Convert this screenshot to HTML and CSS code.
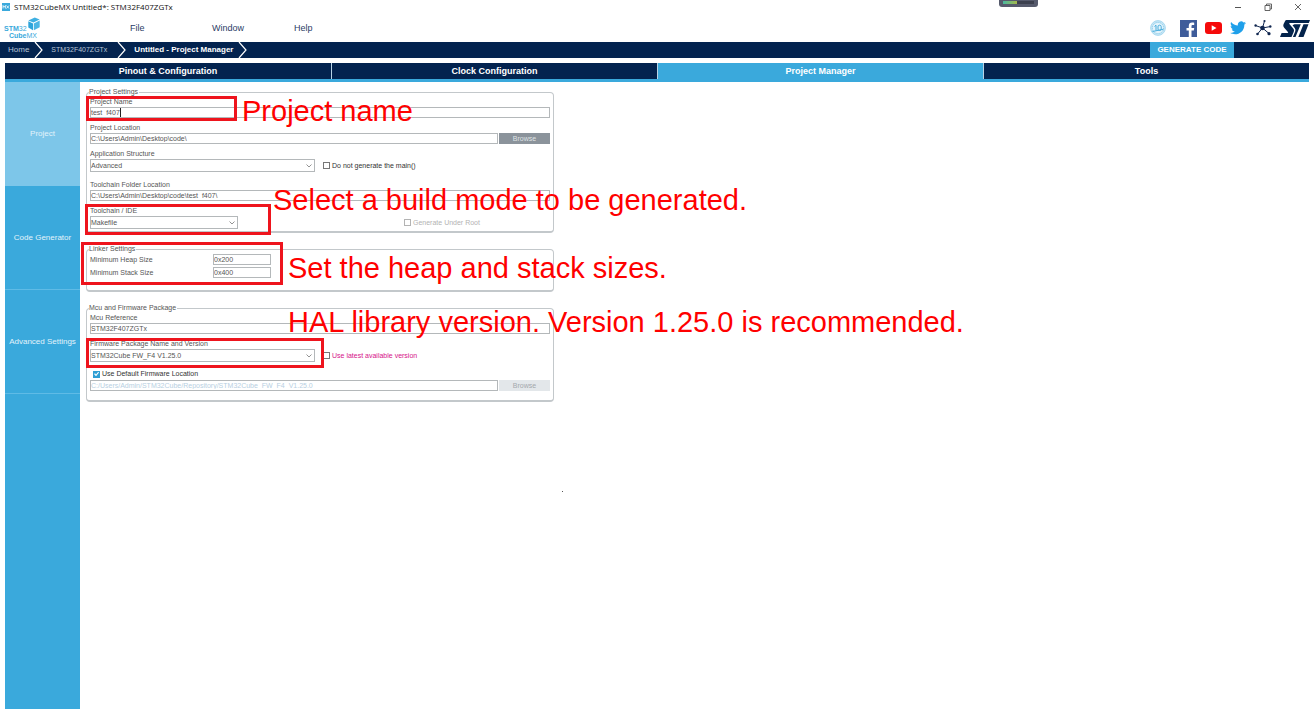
FILE: index.html
```html
<!DOCTYPE html>
<html lang="en">
<head>
<meta charset="utf-8">
<title>STM32CubeMX Untitled*: STM32F407ZGTx</title>
<link rel="stylesheet" href="styles.css">
</head>
<body>
<header class="titlebar">
  <svg class="app-icon" viewBox="0 0 8 8" width="8" height="8" aria-hidden="true"><rect width="8" height="8" fill="#3aa9dc"/><path d="M1 5.500V2.500l1.200 1.700 1.200-1.700v3M4.500 2.500l2.500 3M7 2.500l-2.500 3" fill="none" stroke="#fff" stroke-width=".8"/></svg>
  <span class="title">STM32CubeMX Untitled*: STM32F407ZGTx</span>
  <div class="window-buttons">
    <button aria-label="Minimize"><svg viewBox="0 0 8 8" width="8" height="8"><path d="M1 4.500h6" stroke="#555" fill="none"/></svg></button>
    <button aria-label="Restore"><svg viewBox="0 0 8 8" width="8" height="8"><path d="M1 2.500h5v5h-5zM2.500 2.500v-1.500h5v5h-1.500" stroke="#555" fill="none" stroke-width=".9"/></svg></button>
    <button aria-label="Close"><svg viewBox="0 0 8 8" width="8" height="8"><path d="M1 1l6 6M7 1l-6 6" stroke="#555" fill="none" stroke-width=".9"/></svg></button>
  </div>
</header>

<div class="menubar">
  <div class="logo">
    <div class="logo-top"><b>STM</b>32</div>
    <div class="logo-bottom"><b>Cube</b>MX</div>
    <svg class="cube" viewBox="0 0 12 14" width="12" height="14" aria-hidden="true"><path d="M.3 3.400L6.800.4l4.900 2.200-6.300 3z" fill="#3fb0e2"/><path d="M.3 4.200l4.700 2.200v6.800L.3 10.400z" fill="#2fa5db"/><path d="M5.800 6.400l5.900-2.900v6.800l-5.900 3z" fill="#4db6e4"/></svg>
  </div>
  <nav class="menu">
    <button>File</button><button>Window</button><button>Help</button>
  </nav>
  <div class="links">
    <a href="#" aria-label="10 years"><svg viewBox="0 0 16 16" width="16" height="16"><circle cx="8" cy="8" r="7.400" fill="#c6e6f5" stroke="#9dd3ed" stroke-width=".8"/><circle cx="8" cy="8" r="5.600" fill="#e3f3fb" stroke="#7cc4e6" stroke-width=".8" stroke-dasharray="1.200 .8"/><path d="M4.500 6.500l1.500-1.300v5.300M8 6.500v2.700q0 1.300 1.600 1.300t1.600-1.300V6.700q0-1.500-1.600-1.500T8 6.700M2.500 11.500l11-2.300" fill="none" stroke="#4aaedd"/></svg></a>
    <a href="#" aria-label="Facebook"><svg viewBox="0 0 17 17" width="17" height="17"><rect width="17" height="17" fill="#3e5c9a"/><path d="M11.500 17v-6.500h2.300l.4-2.600h-2.700V6.300c0-.8.3-1.200 1.300-1.200h1.400V2.700c-.5-.1-1.200-.2-2-.2-2.200 0-3.400 1.200-3.400 3.400v2H6.500v2.600h2.300V17z" fill="#fff"/></svg></a>
    <a href="#" aria-label="YouTube"><svg viewBox="0 0 17 12" width="17" height="12"><rect width="17" height="12" rx="3" fill="#f50a0a"/><path d="M6.700 3.300v5.400L11.500 6z" fill="#fff"/></svg></a>
    <a href="#" aria-label="Twitter"><svg viewBox="0 0 24 20" width="16" height="14"><path d="M24 2.400c-.9.400-1.800.7-2.800.8 1-.6 1.800-1.600 2.200-2.700-1 .6-2 1-3.100 1.200A4.900 4.900 0 0 0 11.900 6.200C7.800 6 4.200 4 1.700.9c-1.300 2.300-.7 5.100 1.500 6.600-.8 0-1.600-.2-2.200-.6 0 2.300 1.600 4.400 3.900 4.900-.7.200-1.500.2-2.200.1.600 2 2.400 3.400 4.600 3.400A9.900 9.900 0 0 1 0 17.300C9.200 23 21.500 17 21.500 5.500V4.900c1-.7 1.800-1.600 2.500-2.500z" fill="#1fa0ea"/></svg></a>
    <a href="#" aria-label="Community"><svg viewBox="0 0 18 18" width="18" height="18"><path d="M8.500 9L1.500 6.500M8.500 9l2-7M8.500 9l8-1.500M8.500 9L3.500 15M8.500 9l6.500 5.500" stroke="#10264f" fill="none"/><g fill="#10264f"><circle cx="8.500" cy="9" r="2.300"/><circle cx="1.600" cy="6.500" r="1.200"/><circle cx="10.500" cy="2" r="1.100"/><circle cx="16.300" cy="7.500" r="1.200"/><circle cx="3.500" cy="15" r="1.300"/><circle cx="15" cy="14.700" r="1.600"/></g></svg></a>
    <a href="#" aria-label="STMicroelectronics"><svg viewBox="0 0 30 17" width="30" height="17"><path d="M6.500 0H30l-1.200 3H10q-1.400 0-.6 1l3.800 4.400q1.400 1.500.6 3.300L11.500 17H0l1.600-4h5.900q1.200 0 .4-1L4 7.400Q2.800 5.900 3.500 4.200L5 1.200Q5.500 0 6.500 0z" fill="#03234b"/><path d="M14.500 4.200h6.300L15.500 17h-2.600l2.300-5.500q.8-2-.5-3.500L12.500 5.300zM23.500 4.200h5L23.500 17h-5.200z" fill="#03234b"/></svg></a>
  </div>
</div>

<nav class="crumbs">
  <a href="#">Home</a>
  <svg viewBox="0 0 9 16" width="9" height="16"><path d="M1 0l7 8-7 8" fill="none" stroke="#fff" stroke-width="1.200"/></svg>
  <a href="#" class="device">STM32F407ZGTx</a>
  <svg viewBox="0 0 9 16" width="9" height="16"><path d="M1 0l7 8-7 8" fill="none" stroke="#fff" stroke-width="1.200"/></svg>
  <a href="#" class="current">Untitled - Project Manager</a>
  <svg viewBox="0 0 9 16" width="9" height="16"><path d="M1 0l7 8-7 8" fill="none" stroke="#fff" stroke-width="1.200"/></svg>
  <button class="generate">GENERATE CODE</button>
</nav>

<nav class="tabs">
  <button>Pinout &amp; Configuration</button>
  <button>Clock Configuration</button>
  <button class="active">Project Manager</button>
  <button>Tools</button>
</nav>

<div class="workspace">
  <nav class="sidebar">
    <button class="active">Project</button>
    <button>Code Generator</button>
    <button>Advanced Settings</button>
  </nav>
  <main class="form">
    <fieldset>
      <legend>Project Settings</legend>
      <div class="field"><label for="name">Project Name</label><input id="name" type="text" value="test_f407"></div>
      <div class="field"><label for="location">Project Location</label>
        <div class="with-button"><input id="location" type="text" value="C:\Users\Admin\Desktop\code\"><button class="browse">Browse</button></div></div>
      <div class="field"><label for="structure">Application Structure</label>
        <div class="line">
          <div class="select wide"><select id="structure"><option>Advanced</option></select><svg viewBox="0 0 6 4" width="6" height="4"><path d="M.5.500L3 3 5.500.500" fill="none" stroke="#777" stroke-width=".8"/></svg></div>
          <label class="check"><input type="checkbox">Do not generate the main()</label>
        </div></div>
      <div class="field spaced"><label for="folder">Toolchain Folder Location</label><input id="folder" type="text" value="C:\Users\Admin\Desktop\code\test_f407\"></div>
      <div class="field"><label for="ide">Toolchain / IDE</label>
        <div class="line far">
          <div class="select"><select id="ide"><option>Makefile</option></select><svg viewBox="0 0 6 4" width="6" height="4"><path d="M.5.500L3 3 5.500.500" fill="none" stroke="#777" stroke-width=".8"/></svg></div>
          <label class="check disabled"><input type="checkbox" disabled>Generate Under Root</label>
        </div></div>
    </fieldset>

    <fieldset class="linker">
      <legend>Linker Settings</legend>
      <div class="pair"><label for="heap">Minimum Heap Size</label><input id="heap" type="text" value="0x200"></div>
      <div class="pair"><label for="stack">Minimum Stack Size</label><input id="stack" type="text" value="0x400"></div>
    </fieldset>

    <fieldset class="firmware">
      <legend>Mcu and Firmware Package</legend>
      <div class="field"><label for="mcu">Mcu Reference</label><input id="mcu" type="text" value="STM32F407ZGTx"></div>
      <div class="field"><label for="package">Firmware Package Name and Version</label>
        <div class="line">
          <div class="select wide"><select id="package"><option>STM32Cube FW_F4 V1.25.0</option></select><svg viewBox="0 0 6 4" width="6" height="4"><path d="M.5.500L3 3 5.500.500" fill="none" stroke="#777" stroke-width=".8"/></svg></div>
          <label class="check latest"><input type="checkbox">Use latest available version</label>
        </div></div>
      <div class="field last">
        <label class="check default"><input type="checkbox" checked>Use Default Firmware Location</label>
        <div class="with-button"><input type="text" aria-label="Firmware location" disabled value="C:/Users/Admin/STM32Cube/Repository/STM32Cube_FW_F4_V1.25.0"><button class="browse" disabled>Browse</button></div></div>
    </fieldset>
  </main>
</div>

<div class="meter"><div class="meter-track"><div class="meter-fill"></div></div></div>
<div class="caret"></div>
<div class="speck"></div>
<div class="box box-name"></div>
<div class="box box-ide"></div>
<div class="box box-linker"></div>
<div class="box box-package"></div>
<p class="note note-name">Project name</p>
<p class="note note-ide">Select a build mode to be generated.</p>
<p class="note note-linker">Set the heap and stack sizes.</p>
<p class="note note-package">HAL library version. Version 1.25.0 is recommended.</p>
</body>
</html>
```
FILE: styles.css
```css
* { box-sizing: border-box; }
body {
  margin: 0;
  min-height: 100vh;
  position: relative;
  display: flex;
  flex-direction: column;
  background: #fff;
  color: #555;
  font: 7px/8px "Liberation Sans", Arial, sans-serif;
}
button, input, select { font: inherit; color: inherit; margin: 0; padding: 0; border: 0; border-radius: 0; background: none; }
a { color: inherit; text-decoration: none; }
svg { display: block; }

.titlebar { display: flex; align-items: center; gap: 4px; height: 14px; padding: 0 8px 0 2px; color: #111; }
.title { font: 8px/14px "Open Sans", "Noto Sans", sans-serif; }
.window-buttons { display: flex; gap: 22px; margin-left: auto; padding-right: 4px; }

.menubar { display: flex; align-items: center; height: 28px; padding: 0 4px; }
.logo { position: relative; width: 126px; padding-top: 8px; color: #3aa9dc; line-height: 7px; }
.logo-bottom { padding-left: 5px; }
.cube { position: absolute; left: 24px; top: 0; }
.menu { display: grid; grid-template-columns: repeat(3, 82px); justify-items: start; font-size: 9px; line-height: 12px; color: #2b3c66; }
.links { display: flex; align-items: center; gap: 8px; margin-left: auto; }
.links a:first-child { margin-right: 6px; }

.crumbs { display: flex; align-items: center; height: 16px; padding-left: 8px; background: #03234f; color: #b9c5d6; font-size: 8px; line-height: 16px; }
.crumbs svg { margin: 0 8px 0 5px; }
.crumbs .device { font-size: 7px; padding-right: 5px; }
.crumbs .current { color: #fff; font-weight: bold; }
.generate { height: 16px; width: 84px; margin: 0 80px 0 auto; background: #3aa9dc; color: #fff; font-weight: bold; }

.tabs { display: grid; grid-template-columns: repeat(4, 1fr); margin: 5px 5px 0; background: #03234f; border-bottom: 3px solid #3aa9dc; }
.tabs button { height: 16px; color: #fff; font-size: 9px; font-weight: bold; border-left: 1px solid #b9d3e6; }
.tabs button:first-child { border-left: 0; }
.tabs .active { background: #3aa9dc; }

.workspace { flex: 1; display: flex; margin: 0 5px 5px; }
.sidebar { display: flex; flex-direction: column; width: 75px; background: #3aa9dc; }
.sidebar button { height: 104px; border-bottom: 1px solid #5fbbe6; color: #e3f3fb; font-size: 8px; white-space: nowrap; }
.sidebar .active { background: #7dc6e9; border-color: #7dc6e9; }

.form { width: 474px; padding: 6px 0 0 6px; }
fieldset { min-width: 0; margin: 0 0 12px; padding: 2px 3px; border: 1px solid #c3c8cb; border-bottom-width: 2px; border-radius: 4px; }
legend { margin-left: -1px; padding: 0 1px 0 0; line-height: 8px; }
.field { display: flex; flex-direction: column; gap: 1px; margin-bottom: 6px; }
.field input[type="text"] { width: 100%; }
.field:last-child { margin-bottom: 0; }
.field.spaced { margin-top: 9px; }
input[type="text"] { height: 11px; padding: 0; border: 1px solid #b4b8ba; background: #fff; line-height: 9px; }
input[type="text"]:disabled { color: #b7cfe2; }
.with-button { display: flex; gap: 1px; }
.browse { flex: none; width: 51px; background: #8b939b; color: #dfe3e6; }
.browse:disabled { background: #e3e7ea; color: #a3a8ac; }
.line { display: flex; align-items: center; gap: 8px; }
.far { gap: 166px; }
.select { display: grid; align-items: center; width: 148px; }
.wide { width: 225px; }
.select > * { grid-area: 1 / 1; }
.select select { appearance: none; width: 100%; height: 13px; border: 1px solid #b4b8ba; background: #fff; }
.select svg { justify-self: end; margin-right: 3px; pointer-events: none; }
.check { display: flex; align-items: center; gap: 2px; color: #333; }
.check input { appearance: none; width: 7px; height: 7px; border: 1px solid #777; background: #fff; }
.check input:checked { border-color: #2f9fd4; background: #2f9fd4; }
.check input:checked::before {
  content: "";
  display: block;
  height: 5px;
  background: #fff;
  clip-path: polygon(0 50%, 20% 35%, 40% 60%, 85% 5%, 100% 20%, 40% 95%);
}
.check.disabled { color: #b3b3b3; }
.disabled input { border-color: #b3b3b3; }
.check.latest { color: #d6128a; }

.linker { display: flex; flex-direction: column; padding-top: 1px; padding-bottom: 12px; }
.pair { display: grid; grid-template-columns: 123px 58px; align-items: center; }
.pair + .pair { margin-top: 2px; }
.firmware { padding-bottom: 9px; }
.firmware .last { margin-top: 8px; gap: 2px; }
.default { padding-left: 3px; }

.meter { position: absolute; left: 76%; top: 0; width: 39px; height: 7px; padding: 1px 4px; background: #565a6c; border-radius: 0 0 3px 3px; }
.meter-track { height: 3px; background: #3c404e; }
.meter-fill { width: 14px; height: 3px; background: linear-gradient(90deg, #48b9a0, #a6b84a); }
.caret { position: absolute; left: 120px; top: 108px; width: 1px; height: 9px; background: #222; }
.speck { position: absolute; left: 562px; top: 491px; width: 1px; height: 1px; background: #555; }

.box { position: absolute; border: 3px solid #ee141d; }
.box-name { left: 86px; top: 96px; width: 151px; height: 25px; }
.box-ide { left: 85px; top: 204px; width: 186px; height: 31px; }
.box-linker { left: 81px; top: 242px; width: 202px; height: 43px; }
.box-package { left: 86px; top: 338px; width: 238px; height: 30px; }
.note { position: absolute; margin: 0; color: #f00; font-size: 29px; line-height: 32px; white-space: nowrap; }
.note-name { left: 242px; top: 95px; }
.note-ide { left: 273px; top: 184px; }
.note-linker { left: 288px; top: 252px; }
.note-package { left: 288px; top: 306px; }
```
